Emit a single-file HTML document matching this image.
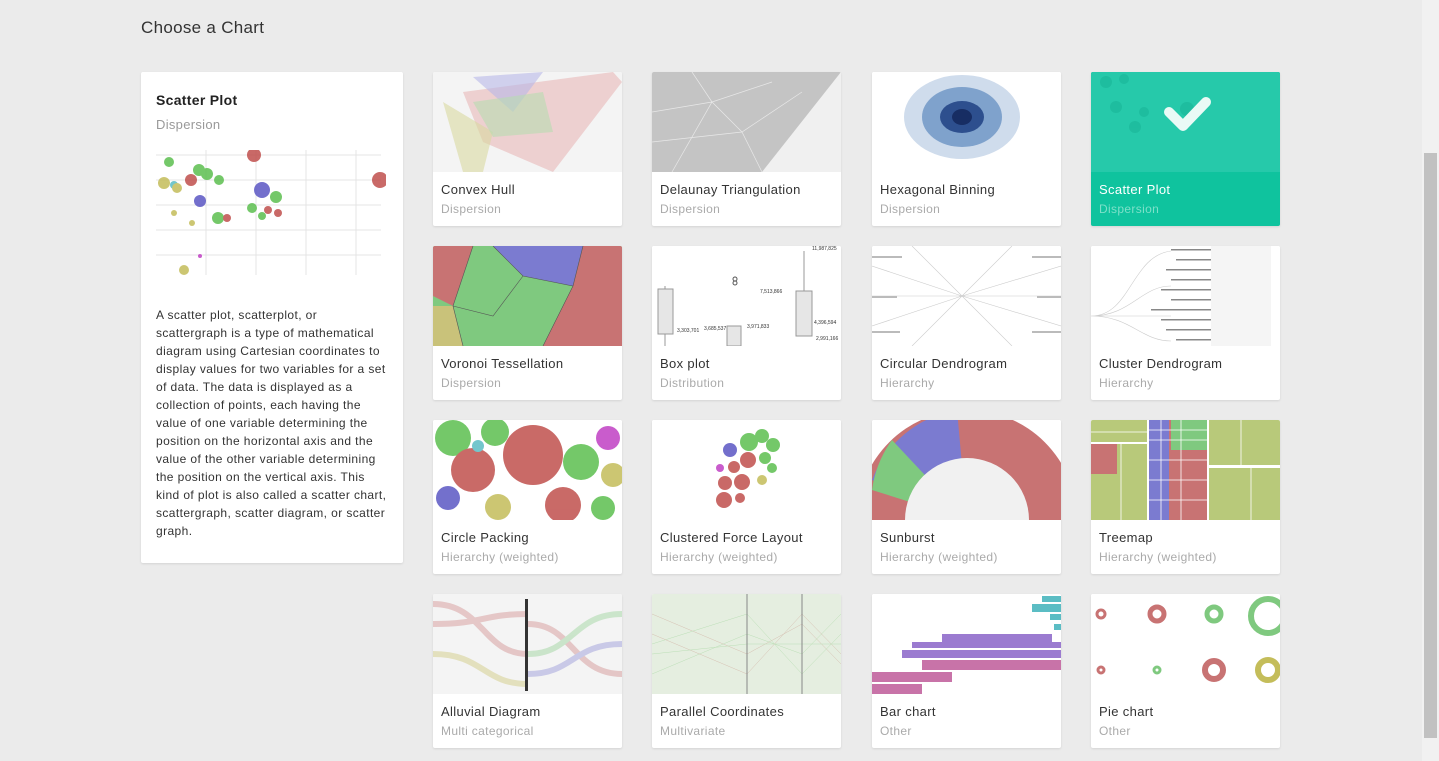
<!DOCTYPE html>
<html><head><meta charset="utf-8"><style>
*{margin:0;padding:0;box-sizing:border-box}
body{width:1439px;height:761px;overflow:hidden;background:#ebebeb;font-family:"Liberation Sans",sans-serif;position:relative}
h1{position:absolute;left:141px;top:18px;font-size:17px;font-weight:normal;color:#333;letter-spacing:.3px}
.panel{position:absolute;left:141px;top:72px;width:262px;height:491px;background:#fff;box-shadow:0 1px 2px rgba(0,0,0,.1);border-radius:2px}
.panel .t{position:absolute;left:15px;top:20px;font-size:14px;font-weight:bold;color:#222;letter-spacing:.3px}
.panel .s{position:absolute;left:15px;top:45px;font-size:13px;color:#999;letter-spacing:.3px}
.panel p{position:absolute;left:15px;top:234px;width:236px;font-size:12px;line-height:18px;color:#333;letter-spacing:.4px}
.card{position:absolute;width:189px;height:154px;background:#fff;border-radius:2px;box-shadow:0 1px 2px rgba(0,0,0,.1);overflow:hidden}
.card .th{position:absolute;left:0;top:0;width:189px;height:100px;background:#f4f4f4;overflow:hidden}
.card .n{position:absolute;left:8px;top:110px;font-size:13px;color:#333;letter-spacing:.35px}
.card .c{position:absolute;left:8px;top:130px;font-size:12px;color:#aaa;letter-spacing:.35px}
.sel{background:#0fc39e}.sel .th{background:#26c9aa}.sel .n{color:#fff}.sel .c{color:#7de0c9}
.sb{position:absolute;left:1422px;top:0;width:17px;height:761px;background:#f1f1f1}
.sb div{position:absolute;left:2px;top:153px;width:13px;height:585px;background:#c1c1c1}
</style></head><body>
<h1>Choose a Chart</h1>
<div class="panel">
<div class="t">Scatter Plot</div><div class="s">Dispersion</div>
<svg style="position:absolute;left:15px;top:78px" width="230" height="125">
<g stroke="#e4e4e4"><line x1="0" y1="5" x2="225" y2="5"/><line x1="0" y1="30" x2="225" y2="30"/><line x1="0" y1="55" x2="225" y2="55"/><line x1="0" y1="80" x2="225" y2="80"/><line x1="0" y1="105" x2="225" y2="105"/><line x1="50" y1="0" x2="50" y2="125"/><line x1="100" y1="0" x2="100" y2="125"/><line x1="150" y1="0" x2="150" y2="125"/><line x1="200" y1="0" x2="200" y2="125"/></g>
<g opacity=".85"><circle cx="98" cy="5" r="7" fill="#c0504d"/><circle cx="13" cy="12" r="5" fill="#5cbf4f"/><circle cx="43" cy="20" r="6" fill="#5cbf4f"/><circle cx="51" cy="24" r="6" fill="#5cbf4f"/><circle cx="63" cy="30" r="5" fill="#5cbf4f"/><circle cx="35" cy="30" r="6" fill="#c0504d"/><circle cx="8" cy="33" r="6" fill="#c4bd5a"/><circle cx="18" cy="35" r="4" fill="#5bbdc4"/><circle cx="21" cy="38" r="5" fill="#c4bd5a"/><circle cx="106" cy="40" r="8" fill="#5b57c4"/><circle cx="120" cy="47" r="6" fill="#5cbf4f"/><circle cx="44" cy="51" r="6" fill="#5b57c4"/><circle cx="96" cy="58" r="5" fill="#5cbf4f"/><circle cx="112" cy="60" r="4" fill="#c0504d"/><circle cx="122" cy="63" r="4" fill="#c0504d"/><circle cx="106" cy="66" r="4" fill="#5cbf4f"/><circle cx="62" cy="68" r="6" fill="#5cbf4f"/><circle cx="71" cy="68" r="4" fill="#c0504d"/><circle cx="18" cy="63" r="3" fill="#c4bd5a"/><circle cx="36" cy="73" r="3" fill="#c4bd5a"/><circle cx="44" cy="106" r="2" fill="#c040c4"/><circle cx="28" cy="120" r="5" fill="#c4bd5a"/><circle cx="224" cy="30" r="8" fill="#c0504d"/></g></svg>
<p>A scatter plot, scatterplot, or scattergraph is a type of mathematical diagram using Cartesian coordinates to display values for two variables for a set of data. The data is displayed as a collection of points, each having the value of one variable determining the position on the horizontal axis and the value of the other variable determining the position on the vertical axis. This kind of plot is also called a scatter chart, scattergraph, scatter diagram, or scatter graph.</p>
</div>

<div class="card" style="left:433px;top:72px"><div class="th"><svg width="189" height="100"><polygon points="30,20 180,0 189,10 120,100 50,70" fill="#e8b8b8" opacity=".6"/><polygon points="40,5 110,0 80,40" fill="#b8b8e8" opacity=".6"/><polygon points="10,30 30,100 50,100 60,60" fill="#d8d8a0" opacity=".6"/><polygon points="40,30 110,20 120,60 60,65" fill="#b8dcb0" opacity=".6"/></svg></div><div class="n">Convex Hull</div><div class="c">Dispersion</div></div>
<div class="card" style="left:652px;top:72px"><div class="th" style="background:#f0f0f0"><svg width="189" height="100"><polygon points="0,0 189,0 110,100 0,100" fill="#c4c4c4"/><g stroke="#e8e8e8" stroke-width=".7" fill="none"><path d="M0,40 L60,30 L120,10 M20,100 L60,30 L90,60 L110,100 M0,70 L90,60 L150,20 M40,0 L60,30"/></g></svg></div><div class="n">Delaunay Triangulation</div><div class="c">Dispersion</div></div>
<div class="card" style="left:872px;top:72px"><div class="th" style="background:#fff"><svg width="189" height="100"><ellipse cx="90" cy="45" rx="58" ry="42" fill="#cfdcec"/><ellipse cx="90" cy="45" rx="40" ry="30" fill="#7fa2cc"/><ellipse cx="90" cy="45" rx="22" ry="16" fill="#2d4f8e"/><ellipse cx="90" cy="45" rx="10" ry="8" fill="#172d63"/></svg></div><div class="n">Hexagonal Binning</div><div class="c">Dispersion</div></div>
<div class="card sel" style="left:1091px;top:72px"><div class="th"><svg width="189" height="100"><g fill="#1cb89a" opacity=".7"><circle cx="15" cy="10" r="6"/><circle cx="33" cy="7" r="5"/><circle cx="25" cy="35" r="6"/><circle cx="53" cy="40" r="5"/><circle cx="96" cy="37" r="7"/><circle cx="44" cy="55" r="6"/></g><path d="M78,40 L92,54 L115,30" stroke="#eafaf6" stroke-width="10" fill="none" stroke-linecap="round" stroke-linejoin="round"/></svg></div><div class="n">Scatter Plot</div><div class="c">Dispersion</div></div>

<div class="card" style="left:433px;top:246px"><div class="th"><svg width="189" height="100"><rect width="189" height="100" fill="#7fc97f"/><polygon points="60,0 150,0 140,40 90,30" fill="#7b7bd0"/><polygon points="150,0 189,0 189,100 110,100 140,40" fill="#c87373"/><polygon points="0,0 40,0 20,60 0,50" fill="#c87373"/><polygon points="0,60 20,60 30,100 0,100" fill="#c9c27a"/><g stroke="#555" stroke-width=".6" fill="none"><path d="M40,0 L20,60 L30,100 M60,0 L90,30 L140,40 L150,0 M140,40 L110,100 M20,60 L60,70 L90,30"/></g></svg></div><div class="n">Voronoi Tessellation</div><div class="c">Dispersion</div></div>
<div class="card" style="left:652px;top:246px"><div class="th" style="background:#fff"><svg width="189" height="100" font-size="5" fill="#333"><g stroke="#999" fill="#e6e6e6"><line x1="13" y1="40" x2="13" y2="100"/><rect x="6" y="43" width="15" height="45"/><rect x="75" y="80" width="14" height="20"/><rect x="144" y="45" width="16" height="45"/><line x1="152" y1="5" x2="152" y2="45"/></g><text x="160" y="4">11,987,825</text><text x="108" y="47">7,513,866</text><text x="25" y="86">3,303,701</text><text x="52" y="84">3,685,537</text><text x="95" y="82">3,971,833</text><text x="162" y="78">4,396,594</text><text x="164" y="94">2,991,166</text><circle cx="83" cy="33" r="2" fill="none" stroke="#555"/><circle cx="83" cy="37" r="2" fill="none" stroke="#555"/></svg></div><div class="n">Box plot</div><div class="c">Distribution</div></div>
<div class="card" style="left:872px;top:246px"><div class="th" style="background:#fff"><svg width="189" height="100"><g stroke="#ccc" stroke-width=".6"><path d="M90,50 L0,20 M90,50 L0,50 M90,50 L0,80 M90,50 L189,20 M90,50 L189,50 M90,50 L189,80 M90,50 L40,0 M90,50 L140,0 M90,50 L40,100 M90,50 L140,100"/></g><g fill="#bbb"><rect x="0" y="10" width="30" height="2"/><rect x="160" y="10" width="29" height="2"/><rect x="0" y="50" width="25" height="2"/><rect x="165" y="50" width="24" height="2"/><rect x="0" y="85" width="28" height="2"/><rect x="160" y="85" width="29" height="2"/></g></svg></div><div class="n">Circular Dendrogram</div><div class="c">Hierarchy</div></div>
<div class="card" style="left:1091px;top:246px"><div class="th" style="background:#fff"><svg width="189" height="100"><g stroke="#ccc" stroke-width=".6" fill="none"><path d="M0,70 C40,70 40,10 80,5 M0,70 C40,70 50,40 80,40 M0,70 C40,70 50,70 80,70 M0,70 C40,70 50,95 80,95"/></g><g fill="#888"><rect x="80" y="3" width="40" height="1.5"/><rect x="85" y="13" width="35" height="1.5"/><rect x="75" y="23" width="45" height="1.5"/><rect x="80" y="33" width="40" height="1.5"/><rect x="70" y="43" width="50" height="1.5"/><rect x="80" y="53" width="40" height="1.5"/><rect x="60" y="63" width="60" height="1.5"/><rect x="70" y="73" width="50" height="1.5"/><rect x="75" y="83" width="45" height="1.5"/><rect x="85" y="93" width="35" height="1.5"/></g><g fill="#ccc"><rect x="120" y="0" width="60" height="100" opacity=".2"/></g></svg></div><div class="n">Cluster Dendrogram</div><div class="c">Hierarchy</div></div>

<div class="card" style="left:433px;top:420px"><div class="th" style="background:#fff"><svg width="189" height="100"><g opacity=".85"><circle cx="20" cy="18" r="18" fill="#5cbf4f"/><circle cx="62" cy="12" r="14" fill="#5cbf4f"/><circle cx="40" cy="50" r="22" fill="#c0504d"/><circle cx="100" cy="35" r="30" fill="#c0504d"/><circle cx="148" cy="42" r="18" fill="#5cbf4f"/><circle cx="175" cy="18" r="12" fill="#c040c4"/><circle cx="180" cy="55" r="12" fill="#c4bd5a"/><circle cx="15" cy="78" r="12" fill="#5b57c4"/><circle cx="65" cy="87" r="13" fill="#c4bd5a"/><circle cx="130" cy="85" r="18" fill="#c0504d"/><circle cx="170" cy="88" r="12" fill="#5cbf4f"/><circle cx="45" cy="26" r="6" fill="#5bbdc4"/></g></svg></div><div class="n">Circle Packing</div><div class="c">Hierarchy (weighted)</div></div>
<div class="card" style="left:652px;top:420px"><div class="th" style="background:#fff"><svg width="189" height="100"><g opacity=".85"><circle cx="97" cy="22" r="9" fill="#5cbf4f"/><circle cx="110" cy="16" r="7" fill="#5cbf4f"/><circle cx="121" cy="25" r="7" fill="#5cbf4f"/><circle cx="78" cy="30" r="7" fill="#5b57c4"/><circle cx="96" cy="40" r="8" fill="#c0504d"/><circle cx="113" cy="38" r="6" fill="#5cbf4f"/><circle cx="82" cy="47" r="6" fill="#c0504d"/><circle cx="68" cy="48" r="4" fill="#c040c4"/><circle cx="90" cy="62" r="8" fill="#c0504d"/><circle cx="73" cy="63" r="7" fill="#c0504d"/><circle cx="72" cy="80" r="8" fill="#c0504d"/><circle cx="88" cy="78" r="5" fill="#c0504d"/><circle cx="110" cy="60" r="5" fill="#c4bd5a"/><circle cx="120" cy="48" r="5" fill="#5cbf4f"/></g></svg></div><div class="n">Clustered Force Layout</div><div class="c">Hierarchy (weighted)</div></div>
<div class="card" style="left:872px;top:420px"><div class="th" style="background:#fff"><svg width="189" height="100"><circle cx="95" cy="100" r="110" fill="#c87373"/><path d="M95,100 L0,60 A110,110 0 0 1 85,-10 Z" fill="#7b7bd0"/><path d="M95,100 L0,70 A110,110 0 0 1 20,20 Z" fill="#7fc97f"/><circle cx="95" cy="100" r="62" fill="#f1f1f1"/></svg></div><div class="n">Sunburst</div><div class="c">Hierarchy (weighted)</div></div>
<div class="card" style="left:1091px;top:420px"><div class="th" style="background:#fff"><svg width="189" height="100"><rect x="0" y="0" width="56" height="22" fill="#b8c97a"/><rect x="0" y="24" width="56" height="76" fill="#b8c97a"/><rect x="0" y="24" width="26" height="30" fill="#c87373"/><rect x="58" y="0" width="58" height="100" fill="#c87373"/><rect x="58" y="0" width="20" height="100" fill="#7b7bd0"/><rect x="118" y="0" width="71" height="45" fill="#b8c97a"/><rect x="118" y="48" width="71" height="52" fill="#b8c97a"/><rect x="80" y="0" width="36" height="30" fill="#7fc97f"/><g stroke="#fff" stroke-width=".8" fill="none"><path d="M58,10H116M58,20H116M58,40H116M58,60H116M58,80H116M70,0V100M90,0V100M0,12H56M30,24V100M150,0V45M160,48V100"/></g></svg></div><div class="n">Treemap</div><div class="c">Hierarchy (weighted)</div></div>

<div class="card" style="left:433px;top:594px"><div class="th"><svg width="189" height="100"><g fill="none" stroke-width="6" opacity=".35"><path d="M0,10 C50,10 50,60 95,60" stroke="#c87373"/><path d="M0,30 C50,30 50,20 95,20" stroke="#c87373"/><path d="M0,60 C50,60 50,90 95,90" stroke="#c4bd5a"/><path d="M95,30 C140,30 140,80 189,80" stroke="#c87373"/><path d="M95,60 C140,60 140,20 189,20" stroke="#7fc97f"/><path d="M95,80 C140,80 140,50 189,50" stroke="#7b7bd0"/></g><g fill="#333"><rect x="92" y="5" width="3" height="92"/></g></svg></div><div class="n">Alluvial Diagram</div><div class="c">Multi categorical</div></div>
<div class="card" style="left:652px;top:594px"><div class="th"><svg width="189" height="100"><g fill="none" stroke-width=".5" opacity=".6"><path d="M0,20 L95,60 L150,30 L189,70" stroke="#c87373"/><path d="M0,50 L95,20 L150,80 L189,40" stroke="#7fc97f"/><path d="M0,80 L95,40 L150,60 L189,20" stroke="#7fc97f"/><path d="M0,40 L95,80 L150,20 L189,60" stroke="#c87373"/><path d="M0,60 L95,50 L150,50 L189,50" stroke="#7fc97f"/></g><rect x="0" y="0" width="189" height="100" fill="#cfe6c2" opacity=".4"/><g stroke="#888"><line x1="95" y1="0" x2="95" y2="100"/><line x1="150" y1="0" x2="150" y2="100"/></g></svg></div><div class="n">Parallel Coordinates</div><div class="c">Multivariate</div></div>
<div class="card" style="left:872px;top:594px"><div class="th" style="background:#fff"><svg width="189" height="100"><g fill="#9b7bd0"><rect x="40" y="48" width="150" height="6"/><rect x="70" y="40" width="110" height="8"/><rect x="30" y="56" width="160" height="8"/></g><g fill="#c873a8"><rect x="50" y="66" width="139" height="10"/><rect x="0" y="78" width="80" height="10"/><rect x="0" y="90" width="50" height="10"/></g><g fill="#5bbdc4"><rect x="170" y="2" width="19" height="6"/><rect x="160" y="10" width="29" height="8"/><rect x="178" y="20" width="11" height="6"/><rect x="182" y="30" width="7" height="6"/></g></svg></div><div class="n">Bar chart</div><div class="c">Other</div></div>
<div class="card" style="left:1091px;top:594px"><div class="th" style="background:#fff"><svg width="189" height="100" fill="none"><circle cx="10" cy="20" r="4" stroke="#c87373" stroke-width="3"/><circle cx="66" cy="20" r="7" stroke="#c87373" stroke-width="5"/><circle cx="123" cy="20" r="7" stroke="#7fc97f" stroke-width="5"/><circle cx="177" cy="22" r="17" stroke="#7fc97f" stroke-width="6"/><circle cx="10" cy="76" r="3" stroke="#c87373" stroke-width="3"/><circle cx="66" cy="76" r="3" stroke="#7fc97f" stroke-width="3"/><circle cx="123" cy="76" r="9" stroke="#c87373" stroke-width="6"/><circle cx="177" cy="76" r="10" stroke="#c4bd5a" stroke-width="6"/></svg></div><div class="n">Pie chart</div><div class="c">Other</div></div>

<div class="sb"><div></div></div>
</body></html>
